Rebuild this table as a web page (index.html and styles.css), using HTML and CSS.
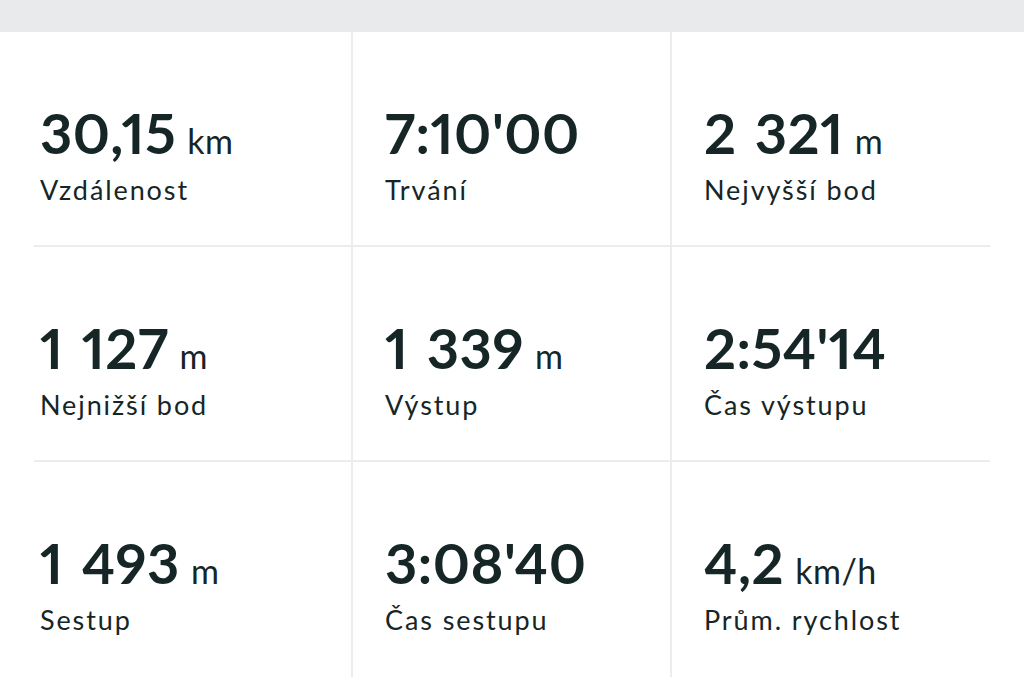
FILE: index.html
```html
<!DOCTYPE html>
<html lang="cs">
<head>
<meta charset="utf-8">
<title>Statistiky</title>
<link rel="stylesheet" href="styles.css">
</head>
<body>
<div class="topband"></div>
<main class="stats">
  <div class="cell"><div class="value">30,15<span class="unit">km</span></div><div class="label">Vzdálenost</div></div>
  <div class="cell"><div class="value">7:10'00</div><div class="label">Trvání</div></div>
  <div class="cell"><div class="value">2 321<span class="unit">m</span></div><div class="label">Nejvyšší bod</div></div>
  <div class="cell"><div class="value">1 127<span class="unit">m</span></div><div class="label">Nejnižší bod</div></div>
  <div class="cell"><div class="value">1 339<span class="unit">m</span></div><div class="label">Výstup</div></div>
  <div class="cell"><div class="value">2:54'14</div><div class="label">Čas výstupu</div></div>
  <div class="cell"><div class="value">1 493<span class="unit">m</span></div><div class="label">Sestup</div></div>
  <div class="cell"><div class="value">3:08'40</div><div class="label">Čas sestupu</div></div>
  <div class="cell"><div class="value">4,2<span class="unit">km/h</span></div><div class="label">Prům. rychlost</div></div>
</main>
</body>
</html>
```

FILE: styles.css
```css
html, body {
  margin: 0;
  padding: 0;
  background: #ffffff;
}

body {
  width: 1024px;
  height: 695px;
  overflow: hidden;
  font-family: Lato, "Open Sans", "Liberation Sans", sans-serif;
  color: #162626;
}

.topband {
  height: 32px;
  background: #e9eaec;
}

.stats {
  display: grid;
  grid-template-columns: 317px 319px 320px;
  margin-left: 34px;
  width: 956px;
}

.cell {
  box-sizing: border-box;
  height: 215px;
  padding: 73px 0 0 32px;
  border-bottom: 2px solid #ececec;
  border-left: 2px solid #ececec;
}

.cell:nth-child(3n+1) {
  border-left: none;
  padding-left: 6px;
}

.cell:nth-child(n+7) {
  border-bottom: none;
}

.value {
  font-size: 56px;
  line-height: 56px;
  font-weight: 700;
  letter-spacing: 0.5px;
  word-spacing: 4px;
  font-variant-numeric: proportional-nums;
  font-feature-settings: "pnum" 1;
  white-space: nowrap;
}

.unit {
  font-size: 34px;
  line-height: 1;
  font-weight: 400;
  letter-spacing: 0.5px;
  word-spacing: 0;
  margin-left: 11px;
}

.label {
  margin-top: 14px;
  font-size: 27px;
  line-height: 30px;
  font-weight: 400;
  letter-spacing: 1.9px;
  white-space: nowrap;
}
```
